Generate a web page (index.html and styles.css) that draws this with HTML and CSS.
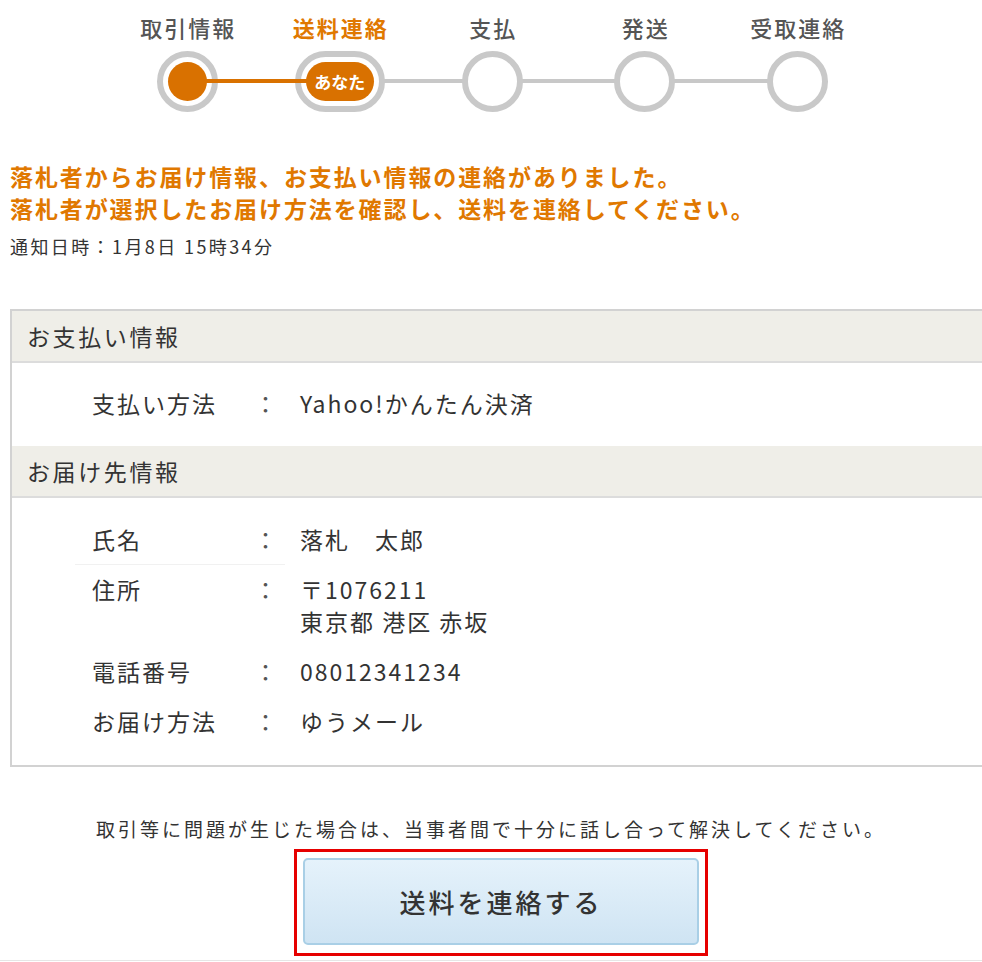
FILE: index.html
```html
<!DOCTYPE html>
<html lang="ja">
<head>
<meta charset="utf-8">
<title>送料連絡</title>
<link rel="stylesheet" href="styles.css">
</head>
<body>
<div class="page">
  <div class="stepper">
    <div class="step-labels">
      <span class="step-label">取引情報</span>
      <span class="step-label current">送料連絡</span>
      <span class="step-label">支払</span>
      <span class="step-label">発送</span>
      <span class="step-label">受取連絡</span>
    </div>
    <div class="track">
      <span class="track-line"></span>
      <span class="track-line done"></span>
      <div class="node-cell"><span class="node done"><span class="dot"></span></span></div>
      <div class="node-cell"><span class="node now"><span class="pill">あなた</span></span></div>
      <div class="node-cell"><span class="node"></span></div>
      <div class="node-cell"><span class="node"></span></div>
      <div class="node-cell"><span class="node"></span></div>
    </div>
  </div>

  <div class="notice">
    <p class="msg">落札者からお届け情報、お支払い情報の連絡がありました。<br>落札者が選択したお届け方法を確認し、送料を連絡してください。</p>
    <p class="date">通知日時：1月8日 15時34分</p>
  </div>

  <section class="info">
    <h2 class="info-head">お支払い情報</h2>
    <div class="info-body pay">
      <div class="row">
        <span class="k">支払い方法</span><span class="c">：</span><span class="v">Yahoo!かんたん決済</span>
      </div>
    </div>
    <h2 class="info-head">お届け先情報</h2>
    <div class="info-body ship">
      <div class="row sep">
        <span class="k">氏名</span><span class="c">：</span><span class="v">落札　太郎</span>
      </div>
      <div class="row">
        <span class="k">住所</span><span class="c">：</span><span class="v">〒1076211<br>東京都 港区 赤坂</span>
      </div>
      <div class="row">
        <span class="k">電話番号</span><span class="c">：</span><span class="v">08012341234</span>
      </div>
      <div class="row">
        <span class="k">お届け方法</span><span class="c">：</span><span class="v">ゆうメール</span>
      </div>
    </div>
  </section>

  <p class="caution">取引等に問題が生じた場合は、当事者間で十分に話し合って解決してください。</p>

  <div class="action">
    <div class="highlight">
      <button class="send-btn" type="button">送料を連絡する</button>
    </div>
  </div>
  <div class="bottom-rule"></div>
</div>
</body>
</html>
```

FILE: styles.css
```css
html, body {
  margin: 0;
  padding: 0;
  background: #fff;
  overflow: hidden;
}
body {
  font-family: "Noto Sans CJK JP", "Noto Sans", sans-serif;
  color: #333;
}
.page {
  width: 982px;
}

/* stepper */
.stepper {
  padding-top: 12px;
  margin-left: 111px;
}
.step-labels,
.track {
  display: grid;
  grid-template-columns: repeat(5, 152.5px);
  justify-items: center;
}
.step-label {
  font-size: 22px;
  line-height: 30px;
  letter-spacing: 2px;
  margin-right: -2px;
  font-weight: 500;
  color: #555;
}
.step-label.current {
  color: #e07800;
  font-weight: 700;
}
.track {
  position: relative;
  margin-top: 8px;
  height: 62px;
  align-items: center;
}
.track-line {
  position: absolute;
  left: 76px;
  width: 610px;
  top: 29px;
  height: 4px;
  background: #c8c8c8;
  z-index: 0;
}
.track-line.done {
  width: 120px;
  background: #d97100;
  z-index: 2;
}
.node-cell {
  position: relative;
  z-index: 1;
  display: flex;
  justify-content: center;
}
.node {
  box-sizing: border-box;
  width: 61px;
  height: 61px;
  border-radius: 50%;
  border: 6px solid #c9c9c9;
  background: #fff;
  display: flex;
  align-items: center;
  justify-content: center;
}
.node .dot {
  width: 39px;
  height: 39px;
  border-radius: 50%;
  background: #d97100;
}
.node.now {
  width: 90px;
  border-radius: 31px;
}
.pill {
  width: 68px;
  height: 39px;
  border-radius: 20px;
  background: #d97100;
  color: #fff;
  font-size: 17px;
  font-weight: 700;
  line-height: 39px;
  text-align: center;
}

/* notice */
.notice {
  padding-left: 10px;
  margin-top: 48px;
}
.msg {
  margin: 0;
  font-size: 23px;
  line-height: 32px;
  font-weight: 700;
  letter-spacing: 1.9px;
  color: #e07800;
}
.date {
  margin: 7px 0 0;
  font-size: 18px;
  line-height: 30px;
  letter-spacing: 2.4px;
  color: #333;
}

/* info box */
.info {
  margin: 48px 0 0 10px;
  border: 2px solid #d2d2d2;
  border-right: none;
}
.info-head {
  margin: 0;
  height: 50px;
  padding-left: 15px;
  background: #efeee8;
  border-bottom: 2px solid #dcdcdc;
  font-size: 23px;
  font-weight: 400;
  line-height: 50px;
  letter-spacing: 2.6px;
  color: #333;
}
.info-body {
  display: flex;
  flex-direction: column;
  gap: 18px;
  padding-left: 80px;
}
.info-body.pay {
  padding-top: 24px;
  padding-bottom: 27px;
}
.info-body.ship {
  padding-top: 25px;
  padding-bottom: 28px;
}
.row {
  display: grid;
  grid-template-columns: 173px 35px 1fr;
  font-size: 23px;
  line-height: 32px;
  letter-spacing: 2px;
  color: #333;
}
.row.sep {
  position: relative;
}
.row.sep::after {
  content: "";
  position: absolute;
  left: -17px;
  width: 210px;
  bottom: -10px;
  height: 1px;
  background: #f1f1f1;
}
.row .c {
  color: #555;
  margin-left: -11px;
}

/* footer */
.caution {
  margin: 47px 0 0;
  text-align: center;
  font-size: 19px;
  line-height: 30px;
  letter-spacing: 3px;
  color: #333;
}
.action {
  display: flex;
  justify-content: center;
  padding-left: 20px;
  margin-top: 5px;
}
.highlight {
  border: 3px solid #e60000;
  padding: 6px 6px 8px;
}
.send-btn {
  display: block;
  width: 396px;
  height: 87px;
  border: 2px solid #a9cfe6;
  border-radius: 5px;
  background: linear-gradient(#e5f2fb, #cfe4f3);
  font-family: "Noto Sans CJK JP", sans-serif;
  font-size: 26px;
  font-weight: 500;
  letter-spacing: 3px;
  color: #333;
  cursor: pointer;
}
.bottom-rule {
  margin-top: 4px;
  height: 1px;
  background: #e6e6e6;
}
```
